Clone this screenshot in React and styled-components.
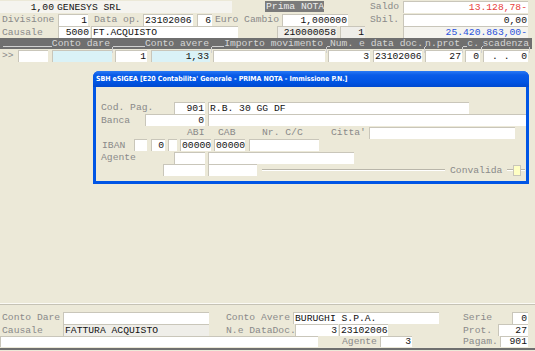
import React from 'react';
import styled, { createGlobalStyle } from 'styled-components';

const GlobalStyle = createGlobalStyle`
  html, body {
    margin: 0;
    padding: 0;
    background: #ece9d8;
  }
  body {
    font-family: 'Liberation Mono', 'Courier New', monospace;
    font-size: 9.7px;
  }
`;

const tones = {
  white: '#ffffff',
  cyan: '#daf2f7',
  gray: '#efeee9',
  soft: '#f5f4ef',
  yellow: '#ffffc4',
};

const Screen = styled.div`
  width: 535px;
  height: 351px;
  display: flex;
  flex-direction: column;
  background: #ece9d8;
  overflow: hidden;
  color: #111;
`;

const Row = styled.div`
  display: flex;
  align-items: center;
  flex: none;
  height: ${p => p.$h || 13}px;
`;

const Label = styled.span`
  flex: none;
  color: #8a8a8a;
  white-space: pre;
  line-height: 11px;
  margin-left: ${p => p.$ml || 0}px;
  width: ${p => (p.$w ? p.$w + 'px' : 'auto')};
`;

const Field = styled.div`
  box-sizing: border-box;
  flex: none;
  width: ${p => p.$w}px;
  height: ${p => p.$fh || 12}px;
  margin-left: ${p => p.$ml || 0}px;
  background: ${p => tones[p.$tone || 'white']};
  border-top: 1px solid ${p => (p.$flat ? 'transparent' : '#c9c6ba')};
  border-left: 1px solid ${p => (p.$flat ? 'transparent' : '#c9c6ba')};
  padding: 0 1px;
  line-height: ${p => (p.$fh || 12) - 1}px;
  text-align: ${p => p.$align || 'left'};
  color: ${p => p.$color || '#111'};
  white-space: pre;
  overflow: hidden;
`;

const Tag = styled.div`
  flex: none;
  box-sizing: border-box;
  width: ${p => p.$w}px;
  height: 11px;
  margin-left: ${p => p.$ml || 0}px;
  background: #7b7b7b;
  color: #ececec;
  line-height: 11px;
  padding-left: 1px;
  white-space: pre;
`;

const HeaderBar = styled.div`
  display: flex;
  align-items: stretch;
  flex: none;
  height: 11px;
  width: 532px;
  background: #6f6f6f;
  padding-left: 3px;
  box-sizing: border-box;
`;

const HeadCell = styled.div`
  position: relative;
  flex: none;
  display: flex;
  align-items: flex-end;
  width: ${p => p.$w}px;
  color: #d6d6d6;
  line-height: 10px;
  white-space: pre;

  &::before {
    content: '';
    flex: 1;
    border-bottom: 1px solid #d0d0d0;
    margin-bottom: 2px;
  }
  &::after {
    content: '';
    position: absolute;
    right: 0;
    bottom: -4px;
    height: 6px;
    border-right: 1px solid #d0d0d0;
  }
`;

const HeadText = styled.span`
  padding-right: ${p => p.$pr ?? 3}px;
`;

const Desk = styled.div`
  flex: 1;
  display: flex;
  flex-direction: column;
`;

const Dialog = styled.div`
  display: flex;
  flex-direction: column;
  width: 436px;
  height: 113px;
  margin: 9px 0 0 93px;
  border-radius: 6px 6px 0 0;
  overflow: hidden;
  background: #0055e5;
`;

const TitleBar = styled.div`
  flex: none;
  height: 16px;
  display: flex;
  align-items: center;
  padding-left: 3px;
  background: linear-gradient(to bottom, #2a7af5 0%, #0a5ce8 25%, #0054e3 70%, #0049cf 100%);
  color: #ffffff;
  font-family: 'DejaVu Sans Condensed', 'Liberation Sans', sans-serif;
  font-weight: bold;
  font-size: 7px;
  letter-spacing: -0.05px;
  white-space: pre;
`;

const DialogBody = styled.div`
  flex: 1;
  display: flex;
  flex-direction: column;
  margin: 0 3px 3px 3px;
  padding-top: 14px;
  background: #ece9d8;
`;

const Etch = styled.div`
  flex: none;
  width: ${p => p.$w}px;
  margin-left: ${p => p.$ml || 0}px;
  height: 0;
  border-top: 1px solid #b9b6aa;
  border-bottom: 1px solid #ffffff;
`;

const Check = styled.div`
  flex: none;
  box-sizing: border-box;
  width: 8px;
  height: 11px;
  background: ${tones.yellow};
  border: 1px solid #c9c6ba;
`;

const BottomPanel = styled.div`
  flex: none;
  display: flex;
  flex-direction: column;
  box-sizing: border-box;
  height: 46px;
  margin-bottom: 1px;
  padding-top: 6px;
  border-top: 1px solid #c5c2b5;
  border-bottom: 2px solid #6f6f6f;
  box-shadow: 0 -1px 0 #fbfaf5;
`;

export default function App() {
  return (
    <Screen>
      <GlobalStyle />

      <Row $h={13}>
        <Field $w={55} $tone="soft" $flat $align="right">1,00</Field>
        <Field $w={177} $tone="soft" $flat>GENESYS SRL</Field>
        <Tag $ml={33} $w={59}>Prima NOTA</Tag>
        <Label $ml={46} $w={30}>Saldo</Label>
        <Field $ml={3} $w={125} $align="right" $color="#e8413c">13.128,78-</Field>
      </Row>

      <Row $h={13}>
        <Label $ml={2} $w={56}>Divisione</Label>
        <Field $w={30} $align="right">1</Field>
        <Label $ml={6} $w={48}>Data op.</Label>
        <Field $ml={1} $w={50}>23102006</Field>
        <Field $ml={4} $w={15} $align="right">6</Field>
        <Label $ml={3} $w={66}>Euro Cambio</Label>
        <Field $ml={1} $w={66} $align="right">1,000000</Field>
        <Label $ml={22} $w={30}>Sbil.</Label>
        <Field $ml={3} $w={125} $align="right">0,00</Field>
      </Row>

      <Row $h={12}>
        <Label $ml={2} $w={56}>Causale</Label>
        <Field $w={32} $align="right">5000</Field>
        <Field $ml={1} $w={147}>FT.ACQUISTO</Field>
        <Field $ml={39} $w={60} $tone="gray" $align="right">210000058</Field>
        <Field $ml={3} $w={25} $tone="gray" $align="right">1</Field>
        <Field $ml={38} $w={125} $tone="soft" $align="right" $color="#2a52dc">25.420.863,00-</Field>
      </Row>

      <HeaderBar>
        <HeadCell $w={110}><HeadText>Conto dare</HeadText></HeadCell>
        <HeadCell $w={99}><HeadText>Conto avere</HeadText></HeadCell>
        <HeadCell $w={115}><HeadText $pr={4}>Importo movimento</HeadText></HeadCell>
        <HeadCell $w={98}><HeadText $pr={2}>Num. e data doc.</HeadText></HeadCell>
        <HeadCell $w={38}><HeadText $pr={3}>n.prot</HeadText></HeadCell>
        <HeadCell $w={19}><HeadText $pr={3}>c.</HeadText></HeadCell>
        <HeadCell $w={48}><HeadText $pr={1}>scadenza</HeadText></HeadCell>
      </HeaderBar>

      <Row $h={13}>
        <Label $ml={2} $w={14}>&gt;&gt;</Label>
        <Field $ml={2} $w={30} />
        <Field $ml={4} $w={60} $tone="cyan" />
        <Field $ml={3} $w={32} $align="right">1</Field>
        <Field $ml={4} $w={59} $tone="cyan" $align="right">1,33</Field>
        <Field $ml={3} $w={112} />
        <Field $ml={3} $w={42} $align="right">3</Field>
        <Field $ml={3} $w={49}>23102006</Field>
        <Field $ml={3} $w={37} $align="right">27</Field>
        <Field $ml={3} $w={15} $align="right">0</Field>
        <Field $ml={3} $w={45} $align="right">{' . .  0'}</Field>
      </Row>

      <Desk>
        <Dialog>
          <TitleBar>SBH eSIGEA [E20 Contabilita' Generale - PRIMA NOTA - Immissione P.N.]</TitleBar>
          <DialogBody>
            <Row $h={13}>
              <Label $ml={5} $w={54}>Cod. Pag.</Label>
              <Field $ml={19} $w={31} $align="right">901</Field>
              <Field $ml={3} $w={261}>R.B. 30 GG DF</Field>
            </Row>
            <Row $h={12}>
              <Label $ml={5} $w={30}>Banca</Label>
              <Field $ml={14} $w={60} $align="right">0</Field>
              <Field $ml={3} $w={318} />
            </Row>
            <Row $h={13}>
              <Label $ml={91} $w={18}>ABI</Label>
              <Label $ml={13} $w={18}>CAB</Label>
              <Label $ml={26} $w={42}>Nr. C/C</Label>
              <Label $ml={27} $w={36}>Citta'</Label>
              <Field $ml={2} $w={146} />
            </Row>
            <Row $h={12}>
              <Label $ml={6} $w={24}>IBAN</Label>
              <Field $ml={8} $w={13} />
              <Field $ml={4} $w={14} $align="right">0</Field>
              <Field $ml={3} $w={9} />
              <Field $ml={3} $w={31}>00000</Field>
              <Field $ml={3} $w={31}>00000</Field>
              <Field $ml={4} $w={70} />
            </Row>
            <Row $h={13}>
              <Label $ml={5} $w={36}>Agente</Label>
              <Field $ml={37} $w={31} />
              <Field $ml={3} $w={146} />
            </Row>
            <Row $h={12}>
              <Field $ml={67} $w={42} />
              <Field $ml={3} $w={49} />
              <Etch $ml={5} $w={183} />
              <Label $ml={5} $w={54}>Convalida</Label>
              <Etch $ml={3} $w={6} />
              <Check />
              <Etch $w={4} />
            </Row>
          </DialogBody>
        </Dialog>
      </Desk>

      <BottomPanel>
        <Row $h={13}>
          <Label $ml={2} $w={60}>Conto Dare</Label>
          <Field $ml={1} $w={146} />
          <Label $ml={17} $w={66}>Conto Avere</Label>
          <Field $ml={1} $w={146}>BURUGHI S.P.A.</Field>
          <Label $ml={24} $w={30}>Serie</Label>
          <Field $ml={19} $w={16} $align="right">0</Field>
        </Row>
        <Row $h={12}>
          <Label $ml={2} $w={60}>Causale</Label>
          <Field $ml={1} $w={146} $tone="gray">FATTURA ACQUISTO</Field>
          <Label $ml={17} $w={69}>N.e DataDoc.</Label>
          <Field $w={43} $align="right">3</Field>
          <Field $ml={1} $w={49}>23102006</Field>
          <Label $ml={75} $w={30}>Prot.</Label>
          <Field $ml={5} $w={30} $align="right">27</Field>
        </Row>
        <Row $h={11}>
          <Field $w={318} $fh={11} />
          <Label $ml={24} $w={36}>Agente</Label>
          <Field $ml={2} $w={32} $fh={11} $align="right">3</Field>
          <Label $ml={51} $w={36}>Pagam.</Label>
          <Field $ml={1} $w={28} $fh={11} $align="right">901</Field>
        </Row>
      </BottomPanel>
    </Screen>
  );
}
